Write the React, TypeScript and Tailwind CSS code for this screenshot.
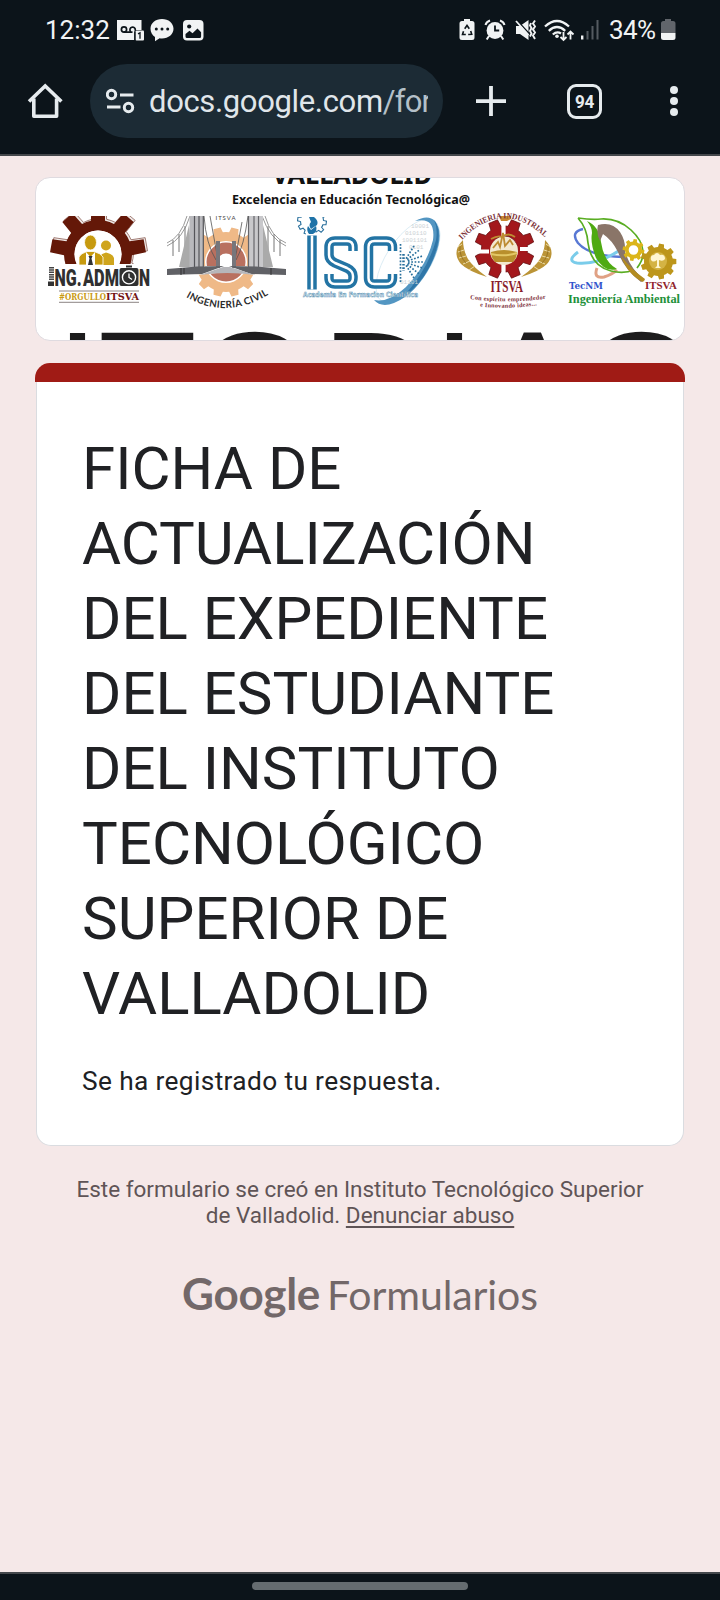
import React from "react";

const LIGHT = "#e6ebee";

function gear(cx: number, cy: number, ro: number, ri: number, n: number, offset = -90, hole = 0) {
  const step = (Math.PI * 2) / n;
  const pt = (r: number, a: number) => `${(cx + r * Math.cos(a)).toFixed(2)},${(cy + r * Math.sin(a)).toFixed(2)}`;
  let d = "";
  for (let i = 0; i < n; i++) {
    const a = (offset * Math.PI) / 180 + i * step;
    d += `${i ? "L" : "M"}${pt(ri, a - step * 0.3)}L${pt(ro, a - step * 0.2)}L${pt(ro, a + step * 0.2)}L${pt(ri, a + step * 0.3)}A${ri},${ri} 0 0 1 ${pt(ri, a + step * 0.7)}`;
  }
  d += "Z";
  if (hole) d += `M${cx - hole},${cy}a${hole},${hole} 0 1 0 ${hole * 2},0a${hole},${hole} 0 1 0 ${-hole * 2},0Z`;
  return d;
}

function StatusBar() {
  return (
    <div className="flex h-[60px] items-center text-[#f1f3f4]">
      <span className="ml-[45px] w-[66px] text-[26px] leading-none">12:32</span>
      <svg className="ml-[6px]" width="27" height="22" viewBox="0 0 27 22">
        <path d="M0 1h24.500v10h-7v10H0z" fill="#f1f3f4" />
        <circle cx="7" cy="10.500" r="2.600" fill="none" stroke="#0c141a" strokeWidth="1.700" />
        <path d="M7 13.200h8.500M13.500 12.500a2.700 2.700 0 1 1 4.800-1.500" fill="none" stroke="#0c141a" strokeWidth="1.700" />
        <rect x="18.500" y="11.500" width="8.500" height="10" rx="1" fill="#f1f3f4" />
        <path d="M17.800 12.500v9M21 14.800l2-1v6" fill="none" stroke="#0c141a" strokeWidth="1.300" />
      </svg>
      <svg className="ml-[6px]" width="24" height="24" viewBox="0 0 24 24">
        <path d="M12 1C5.500 1 .5 5 .5 10.800c0 3.600 1.800 6.400 4.500 8.200v4.200l4.600-3c.8.200 1.600.2 2.400.2 6.500 0 11.500-4 11.500-9.600S18.500 1 12 1z" fill="#f1f3f4" />
        <circle cx="6.300" cy="11" r="1.500" fill="#0c141a" /><circle cx="12" cy="11" r="1.500" fill="#0c141a" /><circle cx="17.700" cy="11" r="1.500" fill="#0c141a" />
      </svg>
      <svg className="ml-[9px]" width="21" height="22" viewBox="0 0 21 22">
        <rect x="0" y="1" width="20.500" height="20.500" rx="4" fill="#f1f3f4" />
        <circle cx="6.200" cy="7.500" r="2.100" fill="#0c141a" />
        <path d="M2.500 15l4-3.200 3 2.400 5-4.700 3.600 3.700V17.500q0 1.500-1.500 1.500H4q-1.500 0-1.500-1.500z" fill="#0c141a" />
      </svg>
      <div className="ml-auto mr-[44px] flex items-center">
        <svg width="16" height="22" viewBox="0 0 16 22">
          <path d="M5 0h6v2h2q2.500 0 2.500 2.500v14q0 2.500-2.500 2.500H3q-2.500 0-2.500-2.500v-14Q.5 2 3 2h2z" fill="#f1f3f4" />
          <path d="M5.700 9.800L8 6.500l2.300 3.300M11.700 12l1 3.200-3.500.3M6.800 15.500H3.500l1-3.300" fill="none" stroke="#0c141a" strokeWidth="1.600" />
        </svg>
        <svg className="ml-[9px]" width="22" height="22" viewBox="0 0 22 22">
          <circle cx="11" cy="11.500" r="8.400" fill="#f1f3f4" />
          <path d="M1.500 6Q2.300 2.800 6 1.500M20.500 6Q19.700 2.800 16 1.500M5 17l-2.300 3.500M17 17l2.300 3.500" stroke="#f1f3f4" strokeWidth="2" fill="none" />
          <path d="M11 6.500v5h4.200" fill="none" stroke="#0c141a" strokeWidth="1.800" />
        </svg>
        <svg className="ml-[9px]" width="22" height="22" viewBox="0 0 22 22">
          <path d="M1 7h4l8.500-6v20L5 15H1z" fill="#f1f3f4" />
          <path d="M2 1.500l13 14" stroke="#0c141a" strokeWidth="1.600" />
          <path d="M1 2l12.500 14" stroke="#f1f3f4" strokeWidth="1.800" />
          <path d="M16 4l-1 2.500 1.500 2.500-1.500 3 1.500 2.500-1.500 3M20 1.500l-2 3 2 3-2 3 2 3-2 3 2 3.500" fill="none" stroke="#f1f3f4" strokeWidth="1.900" />
        </svg>
        <svg className="ml-[7px]" width="31" height="23" viewBox="0 0 31 23">
          <path d="M1 7.500Q13 -3.500 25 7.500M4.800 11.800Q13 4.200 21.200 11.800M8.800 15.500Q13 11.800 17 14.500" fill="none" stroke="#f1f3f4" strokeWidth="2.300" />
          <circle cx="13" cy="17.300" r="1.800" fill="#f1f3f4" />
          <path d="M19.500 13v7.500M16.500 18l3 3 3-3M26.500 20.500V13M23.500 15.500l3-3 3 3" fill="none" stroke="#f1f3f4" strokeWidth="1.800" />
        </svg>
        <svg className="ml-[5px]" width="20" height="22" viewBox="0 0 20 22">
          <path d="M2.200 16.500v4" stroke="#f1f3f4" strokeWidth="2.400" />
          <path d="M7.500 12v8.500M12.500 7v13.500M17.500 1v19.500" stroke="#555b61" strokeWidth="2" />
        </svg>
        <span className="ml-[9px] w-[48px] text-[26px] leading-none tracking-[-0.600px]">34%</span>
        <svg className="ml-[4px]" width="15" height="22" viewBox="0 0 15 22">
          <path d="M4 0h6v2h2q2.500 0 2.500 2.500V14H0V4.500Q0 2 2.500 2H4z" fill="#61656b" />
          <path d="M0 14h14.500v4.500q0 2.500-2.500 2.500H2.500Q0 21 0 18.500z" fill="#f1f3f4" />
        </svg>
      </div>
    </div>
  );
}

function Toolbar() {
  return (
    <div className="flex h-[94px] items-start pt-[4px]">
      <svg className="ml-[27px] mt-[19px]" width="36" height="37" viewBox="0 0 36 37" fill="none" stroke={LIGHT} strokeWidth="3.600" strokeLinejoin="round">
        <path d="M2 18.500L18.200 3l16.200 15.500" strokeLinejoin="miter" />
        <path d="M6.800 15.500v17.800h22.800V15.500" />
      </svg>
      <div className="ml-[27px] flex h-[74px] w-[353px] items-center overflow-hidden rounded-full bg-[#1c2b35] pl-[16px] pr-[15px]">
        <svg className="shrink-0" width="29" height="26" viewBox="0 0 29 26" fill="none" stroke={LIGHT} strokeWidth="3">
          <circle cx="5.500" cy="6.500" r="4.200" /><path d="M14 7h13.500M1 19h13.500" />
          <circle cx="22.500" cy="19.500" r="4.200" />
        </svg>
        <div className="ml-[14px] mt-px flex-1 overflow-hidden whitespace-nowrap text-[31px] leading-[42px] tracking-[-0.350px] text-[#e0e6ea]">docs.google.com<span className="tracking-[-0.800px] text-[#b4c0c8]">/for</span></div>
      </div>
      <svg className="ml-[32px] mt-[21px]" width="32" height="32" viewBox="0 0 32 32" stroke={LIGHT} strokeWidth="3.800">
        <path d="M16 1v30M1 16.200h30" />
      </svg>
      <div className="ml-[60px] mt-[20px] flex h-[35px] w-[35px] items-center justify-center rounded-[9px] border-[3px] border-[#e6ebee] text-[19px] font-bold leading-none tracking-[-0.500px] text-[#e6ebee]">
        <span className="scale-x-90">94</span>
      </div>
      <div className="ml-[68px] mt-[22px] flex flex-col gap-[3px]">
        <i className="h-[8px] w-[8px] rounded-full bg-[#e6ebee]" />
        <i className="h-[8px] w-[8px] rounded-full bg-[#e6ebee]" />
        <i className="h-[8px] w-[8px] rounded-full bg-[#e6ebee]" />
      </div>
    </div>
  );
}

function Fit({ x, y, w, size, fill, children, weight = 700, family = "Noto Sans" }: { x: number; y: number; w: number; size: number; fill: string; children: string; weight?: number; family?: string }) {
  return (
    <text x={x} y={y} textLength={w} lengthAdjust="spacingAndGlyphs" fontSize={size} fontWeight={weight} fontFamily={`"${family}", sans-serif`} fill={fill}>{children}</text>
  );
}

function AdminLogo() {
  const d = gear(98, 254, 48, 34, 9, -90, 23.5);
  return (
    <g>
      <g clipPath="url(#adminClip)">
        <path d={d} fill="#efe8e6" transform="translate(1.500 -1.500)" stroke="#7c4a40" strokeWidth="0.700" />
        <path d={d} fill="#641808" fillRule="evenodd" />
        <circle cx="98" cy="254" r="23.500" fill="#fff" />
      </g>
      <circle cx="106" cy="245.500" r="5" fill="#cfa51d" />
      <path d="M99 265v-7q1-4 7-5.500 7 1.500 8 5.500v7z" fill="#cfa51d" />
      <g stroke="#fff" strokeWidth="0.800">
        <ellipse cx="90.500" cy="242.500" rx="6" ry="7.500" fill="#c79a0e" />
        <path d="M79 265v-8q1.500-3.500 8-5.500h7q7 2 9 5.500v8z" fill="#c79a0e" />
      </g>
      <path d="M86 252l4.500 5 4.500-5v13h-9z" fill="#fff" />
      <path d="M88.500 256h4l-1 2.500 1.500 6.500h-5l1.500-6.500z" fill="#333" />
      <path d="M51.500 267v13" stroke="#444" strokeWidth="5" strokeDasharray="1.500 0.800" />
      <path d="M48 281.500h6v4.500h-6z" fill="#333" />
      <Fit x={54.5} y={286} w={27} size={24.5} fill="#303030" weight={900} family="Roboto">NG.</Fit>
      <Fit x={83} y={286} w={36} size={24.5} fill="#303030" weight={900} family="Roboto">ADM</Fit>
      <rect x="119.500" y="268" width="19" height="18" rx="2" fill="#303030" />
      <path d="M126 266.500h6" stroke="#303030" strokeWidth="2" />
      <circle cx="129" cy="277.300" r="6.600" fill="#303030" stroke="#fff" strokeWidth="1.400" />
      <path d="M129 273.500v4l3 2" stroke="#fff" strokeWidth="1.300" fill="none" />
      <Fit x={139} y={286} w={11} size={24.5} fill="#303030" weight={900} family="Roboto">N</Fit>
      <path d="M59 291h80M59 302.300h80" stroke="#6f6663" strokeWidth="0.800" />
      <Fit x={59} y={300} w={47} size={8.5} fill="#c99a12" family="DejaVu Serif">#ORGULLO</Fit>
      <Fit x={106} y={300} w={33} size={10} fill="#741414" family="DejaVu Serif">ITSVA</Fit>
    </g>
  );
}

function CivilLogo() {
  return (
    <g>
      <path d={gear(226, 262, 35, 30, 12, -75, 21)} fill="#efb987" fillRule="evenodd" />
      <circle cx="226" cy="262" r="14" fill="none" stroke="#b9705f" strokeWidth="11" />
      <path d="M190 266l72 0 6 10-40-4-44 4z" fill="#fff" />
      <g stroke="#999" fill="none" strokeWidth="1">
        <path d="M167 243Q181 237 187 216M167 246Q183 239 190 216M286 243Q271 237 265 216M286 246Q270 239 262 216" />
        <path d="M173 240v16M179 234v18M185 226v40M280 240v16M274 234v18M268 226v40" stroke="#777" />
      </g>
      <path d="M189 225l-10 42h14zM263 225l10 42h-14z" fill="#aaa" />
      <path d="M189.500 216h14v51h-14z" fill="#b9b9bd" /><path d="M194.500 216v51M199 216v51M203.300 216v51" stroke="#55555a" strokeWidth="1.200" />
      <path d="M248 216h15v51h-15z" fill="#c8c8cb" /><path d="M248.500 216v51M254 216v51M258.500 216v51" stroke="#66666b" strokeWidth="1.200" />
      <path d="M204 216q2 28 12 44M248 216q-4 30-12 44M210 216l8 44M242 222l-7 38" stroke="#555" fill="none" strokeWidth="0.800" />
      <path d="M216 241h4v27h-4zM232 241h4v27h-4z" fill="#77767b" />
      <path d="M167 269l30-2.500 27-.5-22 8-35 1zM286 269l-30-2.500-27-.5 22 8 35 1z" fill="#606166" />
      <path d="M200 275l23-8h7l25 8q-28-4-55 0z" fill="#b6b6ba" />
      <path d="M181 268v7M184 268v6M271 268v7" stroke="#333" strokeWidth="1" />
      <text x="215.500" y="219.500" fontSize="6" fontFamily="Lato, sans-serif" fill="#444" textLength="20">ITSVA</text>
      <path id="civilArc" d="M186 297Q226 320 268 295" fill="none" />
      <text fontSize="9.800" fontWeight="700" fontFamily="Lato, sans-serif" fill="#2b2b2b"><textPath href="#civilArc" textLength="87">INGENIERÍA CIVIL</textPath></text>
    </g>
  );
}

function SystemsLogo() {
  const letters = (
    <>
      <path d="M312 235.500v54" />
      <path d="M353 251v-4q0-6-6-6h-12q-6 0-6 6v8q0 5 6 8l12 5q6 3 6 8v2q0 6-6 6h-12q-6 0-6-6v-4" />
      <path d="M392.500 251v-4q0-6-6-6h-12q-6 0-6 6v31q0 6 6 6h12q6 0 6-6v-4" />
    </>
  );
  const rays = [-58, -38, -18, 0, 18, 38, 58];
  return (
    <g>
      <ellipse cx="408" cy="261" rx="48" ry="22" transform="rotate(-57 408 261)" fill="#fff" stroke="#d6e9f3" strokeWidth="0.800" />
      <path d="M415 221Q428 214 435 221Q446 235 431 265Q416 294 394 303Q381 308 374 300Q389 303 406 287Q427 265 433 240Q436 216 415 221Z" fill="#5396c2" />
      <path d="M434 220Q445 234 430 266Q419 287 402 298Q428 270 436 240Q438 228 434 220Z" fill="#2f76a8" />
      <g fill="#ccd2d5" fontFamily="Liberation Mono, monospace" fontSize="6">
        <text x="411" y="228">10001</text><text x="405" y="235">010110</text><text x="402" y="242">1001101</text><text x="409" y="249">0101</text><text x="400" y="284">01101</text>
      </g>
      <g fill="none" stroke="#2374a4" strokeWidth="9.500">{letters}</g>
      <g fill="none" stroke="#fff" strokeWidth="2.500">{letters}</g>
      <g stroke="#286f9c" strokeWidth="1.700" strokeDasharray="1.700 1.600">
        {rays.map((a) => <path key={a} d="M4 0H20" transform={`translate(404 262) rotate(${a})`} />)}
        <path d="M400.500 244v38" /><path d="M403.500 254v17" strokeWidth="2.500" />
      </g>
      <clipPath id="iscGear"><path d="M296 217h32v17.500h-10v-2h-12v2h-10z" /></clipPath>
      <path clipPath="url(#iscGear)" d={gear(312, 221, 14.500, 11.500, 10, -100)} fill="#fff" stroke="#286f9c" strokeWidth="1.100" />
      <path d="M309 217h5q5 4 3 8l-6 4q-3-4 0-7zM308 226l3 4 5-4q2 5-3 8h-4q-3-4-1-8z" fill="#1f73a8" />
      <text x="303" y="297" textLength="115" lengthAdjust="spacingAndGlyphs" fontSize="7" fontWeight="700" fontFamily="DejaVu Sans, sans-serif" fill="#e8f3f9" stroke="#5e94b4" strokeWidth="0.500">Academia En Formacion Científica</text>
    </g>
  );
}

function IndustrialLogo() {
  return (
    <g>
      <path d={gear(504.5, 249, 30, 23, 8, -67.5, 13)} fill="#a3181c" stroke="#641012" strokeWidth="0.800" fillRule="evenodd" />
      <path d="M503.500 218v18M503.500 264v18M472 251.500h17M520 249h17" stroke="#fff" strokeWidth="4.200" />
      <path d="M499 216h12v3l-4 2h-6z" fill="#c88a32" />
      <circle cx="504" cy="251" r="14" fill="#f3e9cf" />
      <path d="M491 252q13-4 26 0 0 6-4 10h-18q-4-4-4-10z" fill="#b98f2c" />
      <path d="M491 254q13 3 26-1" stroke="#e3c766" strokeWidth="2" fill="none" />
      <path d="M493 248l5-6 2 5 3-14 2 13 5-6 3 5M491 239q7-4 11-2 6-5 13 0" stroke="#bd8c32" strokeWidth="1.800" fill="none" />
      {[1, -1].map((s) => (
        <g key={s} transform={`translate(504 0) scale(${s} 1)`}>
          <path d="M41 240Q53 252 43 264Q36 271 17 277Q31 267 36 259Q41 250 41 240Z" fill="#bb9436" />
          <path d="M42 244l4 3M40 250l6 2M38 256l7 2M34 261l7 3M29 266l6 4" stroke="#ecdca6" strokeWidth="1" />
          <path d="M44 246q1 10-6 17" stroke="#8f6c1f" strokeWidth="0.800" fill="none" />
        </g>
      ))}
      <path id="indArc" d="M462 240Q503 197 547 239" fill="none" />
      <text fontSize="8.200" fontWeight="700" fontFamily="Liberation Serif, serif" fill="#7a3038"><textPath href="#indArc" textLength="95" lengthAdjust="spacingAndGlyphs">INGENIERIA INDUSTRIAL</textPath></text>
      <Fit x={490.5} y={291.5} w={32.5} size={17.5} fill="#8a1c2c" family="Liberation Serif">ITSVA</Fit>
      <path id="indA" d="M470 299Q507 304 547 298.500" fill="none" /><path id="indB" d="M480 306.500Q509 309.500 538 305" fill="none" />
      <g fontSize="6.200" fontWeight="700" fontFamily="Liberation Serif, serif" fill="#81333c">
        <text><textPath href="#indA" textLength="76">Con espíritu emprendedor</textPath></text>
        <text><textPath href="#indB" textLength="57">e Innovando ideas...</textPath></text>
      </g>
    </g>
  );
}

function EnvironmentalLogo() {
  return (
    <g fill="none">
      <path d="M583 229Q570 232 578 243Q589 256 623 257" stroke="#5878d4" strokeWidth="2.400" />
      <path d="M578 252Q566 261 577 263Q598 265 620 250" stroke="#7accea" strokeWidth="3" />
      <path d="M597 268Q593 279 604 277Q613 274 617 270" stroke="#e0a184" strokeWidth="3" />
      <path d="M578 218Q592 220 601 219Q618 218 631 230Q642 240 643 251Q644 259 637 268M578 218Q587 228 588 243Q591 266 611 271Q624 274 634 270" stroke="#59ad22" strokeWidth="1.700" />
      <path d="M587 221Q599 226 601 242Q604 262 617 269Q605 273 596 258Q590 243 592 233Q592 227 587 221Z" fill="#4faa12" />
      <path d="M598 225Q612 221 620 232Q626 241 625 252Q631 270 645 280L641 282Q624 269 618 252Q612 240 603 234L600 241Q596 234 598 225Z" fill="#8a7568" />
      <path d="M621 256Q632 270 645 279L643 282Q628 275 621 256Z" fill="#b38c20" />
      <path d={gear(633.5, 250, 11, 8.5, 8, -80, 4.8)} fill="#dbb51a" fillRule="evenodd" />
      <path d={gear(658.5, 261.5, 18, 14.5, 9, -80)} fill="#bd961b" />
      <circle cx="658" cy="261" r="9" fill="#d4b344" />
      <path d="M651 260q-1-5 3-5 3-4 6 0 5-1 5 4-2 3-6 1v6l2 2h-6l2-2v-6q-4 3-6 0z" fill="#fff6d1" />
      <Fit x={569} y={289} w={34} size={9} fill="#3154cc" family="DejaVu Serif">TecNM</Fit>
      <Fit x={645} y={289} w={32} size={9.5} fill="#90242c" family="Liberation Serif">ITSVA</Fit>
      <Fit x={568} y={302.5} w={112} size={12} fill="#21913a" family="Liberation Serif">Ingeniería Ambiental</Fit>
    </g>
  );
}

function Banner() {
  return (
    <div className="h-[164px] w-[650px] overflow-hidden rounded-[15px] border border-[#dfdbe0] bg-white">
      <svg width="648" height="162" viewBox="36 178 648 162">
        <clipPath id="adminClip"><path d="M40 216h120v41l-22 0-4 7H65l-6-5H40z" /></clipPath>
        <Fit x={272} y={183.5} w={160} size={27} fill="#111">VALLADOLID</Fit>
        <Fit x={232} y={203.6} w={238} size={12.5} fill="#111">Excelencia en Educación Tecnológica@</Fit>
        <AdminLogo /><CivilLogo /><SystemsLogo /><IndustrialLogo /><EnvironmentalLogo />
        <text y="444" x="55 98 192 300 321 432 478 579" fontSize="162" fontFamily="Liberation Sans, sans-serif" fill="#1d1c1d">ITO DIAC</text>
      </svg>
    </div>
  );
}

export default function App() {
  return (
    <div className="flex h-[1600px] w-[720px] flex-col overflow-hidden bg-[#f5e8e8] font-[Roboto,sans-serif]">
      <header className="h-[156px] shrink-0 border-b-2 border-[#44474b] bg-[#0c141a]">
        <StatusBar />
        <Toolbar />
      </header>
      <main className="flex flex-1 flex-col items-center pt-[21px]">
        <Banner />
        <section className="mt-[22px] w-[650px]">
          <div className="h-[19px] rounded-t-[15px] bg-[#a01b15]" />
          <div className="mx-px h-[764px] rounded-b-[15px] border border-t-0 border-[#dadce0] bg-white pl-[45px] pt-[49px] text-[#202124]">
            <h1 className="text-[60px] font-normal leading-[75px]">
              FICHA DE<br />ACTUALIZACIÓN<br />DEL EXPEDIENTE<br />DEL ESTUDIANTE<br />DEL INSTITUTO<br />TECNOLÓGICO<br />SUPERIOR DE<br />VALLADOLID
            </h1>
            <p className="mt-[31px] text-[26.250px] leading-[38px] tracking-[0.375px]">Se ha registrado tu respuesta.</p>
          </div>
        </section>
        <footer className="mt-[30px] flex flex-col items-center text-[#5f5456]">
          <p className="whitespace-nowrap text-center text-[22.500px] leading-[26px]">
            Este formulario se creó en Instituto Tecnológico Superior<br />de Valladolid. <a className="underline decoration-[1.500px] underline-offset-[3px]">Denunciar abuso</a>
          </p>
          <div className="mt-[35px] flex items-baseline font-[Lato,sans-serif] text-[41px] leading-[60px] text-[#736869]">
            <span className="text-[44px] font-bold tracking-[-0.300px]">Google</span>
            <span className="ml-[7px] tracking-[-0.100px]">Formularios</span>
          </div>
        </footer>
      </main>
      <nav className="flex h-[28px] shrink-0 justify-center border-t-2 border-[#44474b] bg-[#0c141a] pt-[8px]">
        <div className="h-[8px] w-[216px] rounded-full bg-[#656c70]" />
      </nav>
    </div>
  );
}
